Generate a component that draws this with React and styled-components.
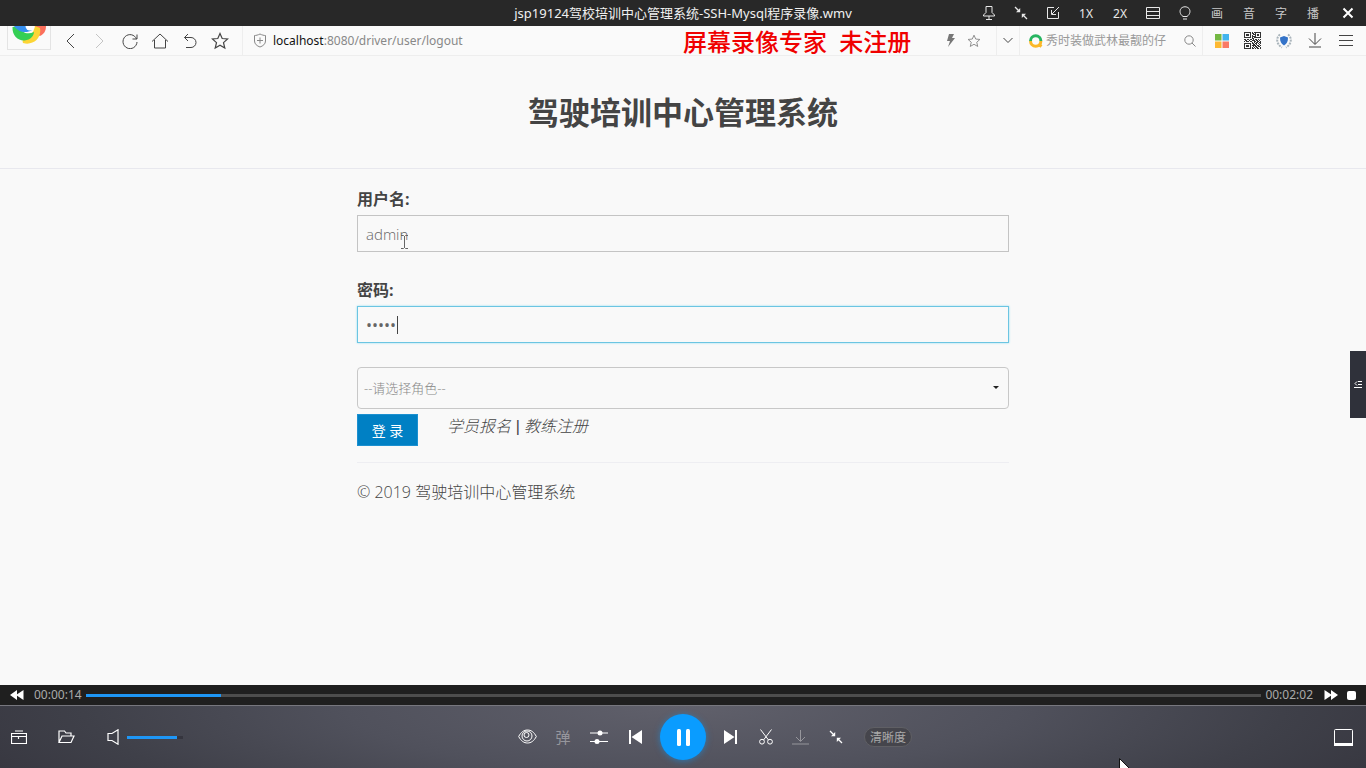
import { useState } from 'react';
import styled, { createGlobalStyle } from 'styled-components';

const GlobalStyle = createGlobalStyle`
  * {
    box-sizing: border-box;
  }

  body {
    margin: 0;
    background: #f9f9f9;
    font-family: 'Noto Sans', 'Noto Sans CJK SC', sans-serif;
  }

  button, input, select {
    font-family: inherit;
    margin: 0;
  }

  svg {
    display: block;
    flex: none;
  }
`;

function formatTime(seconds) {
  const pad = (n) => String(n).padStart(2, '0');
  return `${pad(Math.floor(seconds / 3600))}:${pad(Math.floor(seconds / 60) % 60)}:${pad(seconds % 60)}`;
}

// line icons share the same stroke settings
function Line({ w = 16, h = w, stroke = 'currentColor', sw = 1, children }) {
  return (
    <svg width={w} height={h} viewBox={`0 0 ${w} ${h}`} fill="none" stroke={stroke} strokeWidth={sw} aria-hidden="true">
      {children}
    </svg>
  );
}

const ShrinkIcon = () => (
  <Line w={14}>
    <path d="M1 1l4 4M13 13l-4-4" strokeWidth="1.3" />
    <path d="M6.2 2v4.2H2zM7.8 12V7.8H12z" fill="currentColor" stroke="none" />
  </Line>
);

const StarIcon = ({ size }) => (
  <svg width={size} height={size} viewBox="0 0 18 18" fill="none" stroke="currentColor" strokeWidth="1.2" aria-hidden="true">
    <path d="M9 1.500l2.200 5 5.400.5-4.100 3.600 1.300 5.400L9 13.200 4.200 16l1.300-5.400L1.400 7l5.400-.5z" />
  </svg>
);

const BrowserLogo = () => (
  <svg width="34" height="34" viewBox="0 0 34 34" aria-hidden="true">
    <path d="M18 1a16 16 0 0 1 16 15c0 5-2 8-6 10-3-1-4-5-5-9z" fill="#fb6f5c" />
    <path d="M28 18c2 10-7 18-17 15-1-3 0-5 3-6 6-2 8-6 9-11z" fill="#fcd535" />
    <path d="M.5 17c-.5 9 6 14 12 13.500C19 30 22 25 22 22c-6 3-13 1-15-6z" fill="#35cf55" />
    <path d="M2 16C3 6 12 1 19 3l1 17c-6 4-14 2-18-4z" fill="#358ff0" />
    <circle cx="18" cy="16" r="4.500" fill="#fff" />
  </svg>
);

const QR_ROWS = [
  '11111110101111111',
  '10000010110100001',
  '10111010011101101',
  '10111010100101101',
  '10000010111100001',
  '11111110101111111',
  '00000000110000000',
  '11011011010110101',
  '01100100111011010',
  '10111011001101101',
  '00000000101011011',
  '11111110110110101',
  '10000010011010010',
  '10111010111101101',
  '10111010010110110',
  '10000010101011001',
  '11111110110101101',
];

const QrIcon = () => (
  <svg width="17" height="17" viewBox="0 0 17 17" fill="#333" shapeRendering="crispEdges" aria-hidden="true">
    {QR_ROWS.map((row, y) =>
      row.split('').map((bit, x) => (bit === '1' ? <rect key={`${x}-${y}`} x={x} y={y} width="1" height="1" /> : null))
    )}
  </svg>
);

const titleTools = [
  {
    name: '置顶',
    icon: (
      <Line w={14} h={16}>
        <path d="M4 1.500h6v6l2.500 2.500v1h-11v-1L4 7.500zM7 11v3M4 14.500h6" />
      </Line>
    ),
  },
  { name: '迷你', icon: <ShrinkIcon /> },
  {
    name: '还原',
    icon: (
      <Line w={14}>
        <path d="M8 1.500H1.500v11h11V6M13 1L6 8M5.500 4v4.500H10" />
      </Line>
    ),
  },
  { name: '1X', text: '1X', wide: true },
  { name: '2X', text: '2X', wide: true },
  {
    name: '列表',
    icon: (
      <Line w={14} h={13}>
        <path d="M.5.5h13v11H.5zM.5 4.500h13M.5 8.500h13" />
      </Line>
    ),
  },
  {
    name: '关灯',
    icon: (
      <Line w={12} h={14}>
        <path d="M4 10.500C.5 8 .5 4.500 2 2.500c2-2.300 6-2.300 8 0 1.500 2 1.500 5.500-2 8zM4 13h4" />
      </Line>
    ),
  },
  { name: '画', text: '画', dim: true },
  { name: '音', text: '音', dim: true },
  { name: '字', text: '字', dim: true },
  { name: '播', text: '播', dim: true },
];

const navTools = [
  { name: '后退', icon: <Line w={12} h={16}><path d="M10 1L3 8l7 7" /></Line> },
  { name: '前进', faded: true, icon: <Line w={12} h={16}><path d="M2 1l7 7-7 7" /></Line> },
  { name: '刷新', icon: <Line w={16}><path d="M14.500 6A7 7 0 1 0 15 9M15 1.500V6h-4.500" /></Line> },
  { name: '主页', icon: <Line w={18} h={16}><path d="M1 8.500L9 1l8 7.500M3.500 7v8h11V7" /></Line> },
  { name: '撤销', icon: <Line w={14} h={16}><path d="M5 1L1.500 4.500 5 8M1.500 4.500H8a5 5 0 0 1 0 10H3" /></Line> },
  { name: '收藏', icon: <StarIcon size={18} /> },
];

const extensionTools = [
  {
    name: '应用',
    icon: (
      <svg width="14" height="14" viewBox="0 0 14 14" aria-hidden="true">
        <path fill="#74b843" d="M0 0h6.500v6.500H0z" />
        <path fill="#42b4ee" d="M7.500 0H14v6.500H7.500z" />
        <path fill="#fdb933" d="M0 7.500h6.500V14H0z" />
        <path fill="#f97a66" d="M7.500 7.500H14V14H7.500z" />
      </svg>
    ),
  },
  { name: '二维码', icon: <QrIcon /> },
  {
    name: '安全',
    icon: (
      <svg width="16" height="16" viewBox="0 0 16 16" fill="none" aria-hidden="true">
        <path d="M4 1.500C0 4.500 0 11 6 14.500M12 1.500c4 3 4 9.500-2 13" stroke="#a9b4bb" strokeWidth="2" strokeDasharray="2 1" />
        <path d="M8 3l4 1.500c0 4-1 6-4 8-3-2-4-4-4-8z" fill="#3473c8" />
      </svg>
    ),
  },
  { name: '下载', icon: <Line w={14} h={15}><path d="M7 0v11M1 5.500l6 6 6-6M1 14h12" /></Line> },
  { name: '菜单', icon: <Line w={14} h={13}><path d="M0 1.500h14M0 6.500h14M0 11.500h14" /></Line> },
];

function BrowserBar() {
  return (
    <Toolbar>
      <LogoBox><BrowserLogo /></LogoBox>
      <NavGroup>
        {navTools.map((tool) => (
          <ToolButton key={tool.name} aria-label={tool.name} $faded={tool.faded}>{tool.icon}</ToolButton>
        ))}
      </NavGroup>
      <AddressBox>
        <Line w={14} h={15} stroke="#888">
          <path d="M7 1c2 1 4 1.500 5.500 1.500V8c0 3-2.500 5-5.500 6-3-1-5.500-3-5.500-6V2.500C3 2.500 5 2 7 1zM7 4.500v6M4 7.500h6" />
        </Line>
        <Url href="#logout"><b>localhost</b>:8080/driver/user/logout</Url>
        <SmallTool aria-label="极速模式">
          <svg width="9" height="13" viewBox="0 0 9 13" fill="#777" aria-hidden="true">
            <path d="M3 0h5L6 4h3L2 13l2-6H1z" />
          </svg>
        </SmallTool>
        <SmallTool aria-label="收藏此页"><StarIcon size={14} /></SmallTool>
      </AddressBox>
      <DropButton aria-label="展开"><Line w={10} h={7}><path d="M.5 1L5 5.500 9.500 1" /></Line></DropButton>
      <SearchBox>
        <svg width="14" height="14" viewBox="0 0 14 14" fill="none" strokeWidth="3" aria-hidden="true">
          <path d="M1.500 7a5.200 5.200 0 0 1 10.400 0" stroke="#27b561" />
          <path d="M11.900 7a5.200 5.200 0 0 1-10.400 0M10 10.500l2.500 2" stroke="#fbb829" />
        </svg>
        <SearchInput aria-label="搜索" placeholder="秀时装做武林最靓的仔" />
        <SmallTool aria-label="搜索">
          <Line w={12}><circle cx="5" cy="5" r="4.200" /><path d="M8 8l3.500 3.500" /></Line>
        </SmallTool>
      </SearchBox>
      <ExtensionGroup>
        {extensionTools.map((tool) => (
          <ToolButton key={tool.name} aria-label={tool.name}>{tool.icon}</ToolButton>
        ))}
      </ExtensionGroup>
      <Watermark>屏幕录像专家 <span>未注册</span></Watermark>
    </Toolbar>
  );
}

function LoginPage() {
  const [username, setUsername] = useState('admin');
  const [password, setPassword] = useState('admin');
  const [role, setRole] = useState('');

  return (
    <Page>
      <PageHeader>
        <PageTitle>驾驶培训中心管理系统</PageTitle>
      </PageHeader>
      <LoginColumn>
        <form onSubmit={(e) => e.preventDefault()}>
          <Label htmlFor="username">用户名:</Label>
          <Field>
            <TextInput id="username" value={username} onChange={(e) => setUsername(e.target.value)} />
            <TextPointer>
              <Line w={7} h={14} stroke="#666"><path d="M0 .5h2.500l1 1 1-1H7M3.500 1v12M0 13.500h2.500l1-1 1 1H7" /></Line>
            </TextPointer>
          </Field>
          <Label htmlFor="password">密码:</Label>
          <Field>
            <TextInput id="password" type="password" $active value={password} onChange={(e) => setPassword(e.target.value)} />
            <Caret />
          </Field>
          <SelectWrap>
            <RoleSelect aria-label="角色" value={role} onChange={(e) => setRole(e.target.value)}>
              <option value="">--请选择角色--</option>
              <option value="student">学员</option>
              <option value="coach">教练</option>
            </RoleSelect>
            <SelectArrow width="6" height="3" viewBox="0 0 6 3" aria-hidden="true"><path d="M0 0h6L3 3z" fill="#222" /></SelectArrow>
          </SelectWrap>
          <Actions>
            <LoginButton type="submit">登 录</LoginButton>
            <Links>
              <a href="#student">学员报名</a> | <a href="#coach">教练注册</a>
            </Links>
          </Actions>
        </form>
        <Footer>© 2019 驾驶培训中心管理系统</Footer>
      </LoginColumn>
    </Page>
  );
}

export default function App() {
  const duration = 122;
  const [time, setTime] = useState(14);
  const [volume, setVolume] = useState(90);

  return (
    <Player>
      <GlobalStyle />
      <TitleBar>
        <FileName>jsp19124驾校培训中心管理系统-SSH-Mysql程序录像.wmv</FileName>
        <TitleTools>
          {titleTools.map((tool) => (
            <TitleButton key={tool.name} aria-label={tool.name} $wide={tool.wide} $dim={tool.dim}>
              {tool.icon || tool.text}
            </TitleButton>
          ))}
          <CloseButton aria-label="关闭"><Line w={12} sw={2}><path d="M1.500 1.500l9 9M10.500 1.500l-9 9" /></Line></CloseButton>
        </TitleTools>
      </TitleBar>

      <BrowserBar />
      <LoginPage />

      <SideTab aria-label="播放列表">
        <Line w={8} h={8}><path d="M4 .5h4M4 3.500h4M0 6.500h8M3 .5L1 2.500l2 2" /></Line>
      </SideTab>

      <SeekRow>
        <SeekButton aria-label="快退">
          <svg width="14" height="10" viewBox="0 0 14 10" fill="#fff" aria-hidden="true"><path d="M7 0v10L0 5zM13.500 0v10L6 5z" /></svg>
        </SeekButton>
        <Time>{formatTime(time)}</Time>
        <Slider
          type="range" aria-label="进度" min="0" max={duration} value={time} $rest="#4d4d4d"
          style={{ '--fill': `${(time / duration) * 100}%` }}
          onChange={(e) => setTime(Number(e.target.value))}
        />
        <Time $end>{formatTime(duration)}</Time>
        <SeekButton aria-label="快进">
          <svg width="14" height="10" viewBox="0 0 14 10" fill="#fff" aria-hidden="true"><path d="M.5 0v10L8 5zM7 0v10l7-5z" /></svg>
        </SeekButton>
        <StopButton aria-label="停止" />
      </SeekRow>

      <Controls>
        <ControlSide>
          <FileTools>
            <ControlButton aria-label="工具箱">
              <Line w={16} h={15}><path d="M4 1h8M.5 3.500h15v10H.5zM.5 6.500h15M7.500 6.500v2.500" strokeWidth="1.200" /></Line>
            </ControlButton>
            <ControlButton aria-label="打开文件">
              <Line w={17} h={14}><path d="M1 12.500V1h5.500L8 3h5v3M1 12.500h12L16 6H4z" strokeWidth="1.200" /></Line>
            </ControlButton>
            <ControlButton aria-label="静音">
              <Line w={12} h={16}><path d="M1 4.500h4L11 .8v14.400L5 11.500H1z" strokeWidth="1.200" /></Line>
            </ControlButton>
          </FileTools>
          <Volume>
            <Slider
              type="range" aria-label="音量" min="0" max="100" value={volume} $rest="#35353e"
              style={{ '--fill': `${volume}%` }}
              onChange={(e) => setVolume(Number(e.target.value))}
            />
          </Volume>
          <PlayTools>
            <ControlButton aria-label="画质">
              <Line w={19} h={17}><path d="M.7 7.500C3 3 6 1 9.500 1S16 3 18.300 7.500C16 12 13 14 9.500 14S3 12 .7 7.500z" /><circle cx="9" cy="7" r="5" /><circle cx="8.500" cy="6" r="2.500" /></Line>
            </ControlButton>
            <ControlButton aria-label="弹幕" $dim>弹</ControlButton>
            <ControlButton aria-label="设置">
              <Line w={18} h={14}><path d="M0 3h18M0 11.500h18" /><circle cx="10" cy="3" r="2.500" fill="currentColor" stroke="none" /><circle cx="7" cy="11.500" r="2.500" fill="currentColor" stroke="none" /></Line>
            </ControlButton>
            <ControlButton aria-label="上一个">
              <svg width="13" height="14" viewBox="0 0 13 14" fill="currentColor" aria-hidden="true"><path d="M0 0h2v14H0zM13 0v14L2.500 7z" /></svg>
            </ControlButton>
          </PlayTools>
        </ControlSide>

        <PauseButton aria-label="暂停">
          <svg width="13" height="17" viewBox="0 0 13 17" fill="#fff" aria-hidden="true"><rect width="4" height="17" rx="1.500" /><rect x="9" width="4" height="17" rx="1.500" /></svg>
        </PauseButton>

        <ControlSide>
          <PlayTools $tight>
            <ControlButton aria-label="下一个">
              <svg width="13" height="14" viewBox="0 0 13 14" fill="currentColor" aria-hidden="true"><path d="M11 0h2v14h-2zM0 0v14l10.500-7z" /></svg>
            </ControlButton>
            <ControlButton aria-label="截取">
              <Line w={14} h={16}><path d="M1.500.5l8 10.500M12.500.5L4.500 11" /><circle cx="3" cy="12.700" r="2.400" /><circle cx="11" cy="12.700" r="2.400" /></Line>
            </ControlButton>
            <ControlButton aria-label="下载" $dim>
              <Line w={17} h={15}><path d="M8.500 0v11M4 7l4.500 4.500L13 7M0 14h17" /></Line>
            </ControlButton>
            <ControlButton aria-label="缩小"><ShrinkIcon /></ControlButton>
            <Quality>清晰度</Quality>
          </PlayTools>
          <ControlButton aria-label="全屏">
            <svg width="19" height="17" viewBox="0 0 19 17" aria-hidden="true"><path d="M.5 1.500a1 1 0 0 1 1-1h16a1 1 0 0 1 1 1V15H.5z" fill="none" stroke="#fff" /><path d="M0 14h19v3H0z" fill="#fff" /></svg>
          </ControlButton>
        </ControlSide>
      </Controls>

      <MousePointer width="14" height="20" viewBox="0 0 14 20" aria-hidden="true">
        <path d="M.5.500v16l4-3.500 3 6 2-1-3-5.500h6z" fill="#fff" stroke="#111" />
      </MousePointer>
    </Player>
  );
}

const Player = styled.div`
  position: relative;
  display: flex;
  flex-direction: column;
  min-height: 100vh;
  overflow: hidden;
`;

const PlainButton = styled.button`
  display: flex;
  align-items: center;
  justify-content: center;
  flex: none;
  padding: 0;
  border: none;
  background: none;
  color: inherit;
  cursor: pointer;
`;

const TitleBar = styled.header`
  display: grid;
  grid-template-columns: 1fr auto 1fr;
  align-items: center;
  height: 26px;
  background: #282828;
  color: #f0f0f0;
`;

const FileName = styled.span`
  grid-column: 2;
  font-size: 13px;
  line-height: 26px;
  white-space: nowrap;
`;

const TitleTools = styled.div`
  display: flex;
  justify-content: flex-end;
`;

const TitleButton = styled(PlainButton)`
  width: ${(props) => (props.$wide ? 34 : 32)}px;
  height: 26px;
  font-size: 12px;
  color: ${(props) => (props.$dim ? '#c8c8c8' : '#e8e8e8')};
`;

const CloseButton = styled(TitleButton)`
  width: 37px;
  color: #fff;
`;

const Toolbar = styled.nav`
  position: relative;
  display: flex;
  align-items: center;
  height: 30px;
  border-bottom: 1px solid #eeeeee;
  background: #fafafa;
  color: #444;
`;

const LogoBox = styled.div`
  display: flex;
  align-items: flex-end;
  align-self: flex-start;
  justify-content: center;
  width: 44px;
  height: 24px;
  margin: 0 4px 0 7px;
  padding-bottom: 5px;
  border: 1px solid #e4e4e4;
  border-top: none;
  overflow: hidden;
`;

const NavGroup = styled.div`
  display: flex;
  margin-right: 7px;
`;

const ToolButton = styled(PlainButton)`
  width: 30px;
  height: 29px;
  color: ${(props) => (props.$faded ? '#c4c4c4' : '#444')};
`;

const AddressBox = styled.div`
  display: flex;
  align-items: center;
  flex: 1;
  height: 29px;
  padding: 0 10px;
  border-left: 1px solid #eeeeee;
  border-right: 1px solid #eeeeee;
`;

const Url = styled.a`
  flex: 1;
  margin-left: 6px;
  font-size: 12px;
  color: #888;
  text-decoration: none;

  b {
    font-weight: 400;
    color: #111;
  }
`;

const SmallTool = styled(PlainButton)`
  width: 24px;
  height: 24px;
  color: #888;
`;

const DropButton = styled(ToolButton)`
  width: 22px;
`;

const SearchBox = styled.div`
  display: flex;
  align-items: center;
  width: 184px;
  height: 29px;
  padding-left: 9px;
  border-left: 1px solid #eeeeee;
  border-right: 1px solid #eeeeee;
`;

const SearchInput = styled.input`
  flex: 1;
  min-width: 0;
  margin-left: 3px;
  padding: 0;
  border: none;
  outline: none;
  background: none;
  font-size: 12px;

  &::placeholder {
    color: #999;
  }
`;

const ExtensionGroup = styled.div`
  display: flex;
  padding: 0 5px 0 3px;

  button {
    width: 31px;
  }
`;

const Watermark = styled.div`
  position: absolute;
  left: 50%;
  top: 0;
  font-size: 24px;
  font-weight: 500;
  line-height: 32px;
  white-space: nowrap;
  color: #f00000;
  pointer-events: none;

  span {
    margin-left: 6px;
  }
`;

const Page = styled.main`
  flex: 1;
  background: #f9f9f9;
  color: #444;
  font-family: 'Open Sans', 'Noto Sans CJK SC', sans-serif;
`;

const PageHeader = styled.div`
  padding: 32px 0;
  border-bottom: 1px solid #e8e8ee;
  text-align: center;
`;

const PageTitle = styled.h1`
  margin: 0;
  font-size: 31px;
  line-height: 48px;
  color: #444;
`;

const LoginColumn = styled.section`
  width: calc(50% + 1px);
  min-width: 400px;
  margin: 0 auto;
  padding: 16px 16px 0;
`;

const Label = styled.label`
  display: block;
  margin-bottom: 2px;
  font-size: 16px;
  font-weight: 700;
  line-height: 28px;
`;

const Field = styled.div`
  position: relative;
  margin-bottom: 24px;
`;

const TextInput = styled.input`
  display: block;
  width: 100%;
  height: 37px;
  padding: 0 8px;
  border: 1px solid ${(props) => (props.$active ? '#6cc5e2' : '#c4c4c4')};
  border-radius: 0;
  outline: none;
  box-shadow: ${(props) => (props.$active ? '0 0 2px #8fdcf2' : 'none')};
  background: #f9f9f9;
  font-size: ${(props) => (props.$active ? 16 : 15)}px;
  font-weight: ${(props) => (props.$active ? 400 : 300)};
  color: #666;
`;

const TextPointer = styled.span`
  position: absolute;
  left: 44px;
  top: 20px;
  pointer-events: none;
`;

const Caret = styled.span`
  position: absolute;
  left: 40px;
  top: 10px;
  width: 1px;
  height: 18px;
  background: #444;
`;

const SelectWrap = styled.div`
  position: relative;
  margin-bottom: 5px;
`;

const RoleSelect = styled.select`
  display: block;
  width: 100%;
  height: 42px;
  padding: 0 6px;
  appearance: none;
  border: 1px solid #c8c8c8;
  border-radius: 4px;
  background: #f9f9f9;
  font-size: 13px;
  font-weight: 300;
  color: #888;
`;

const SelectArrow = styled.svg`
  position: absolute;
  right: 10px;
  top: 19px;
  pointer-events: none;
`;

const Actions = styled.div`
  display: flex;
  align-items: flex-start;
  padding-bottom: 16px;
  border-bottom: 1px solid #eeeef2;
`;

const LoginButton = styled(PlainButton)`
  width: 61px;
  height: 32px;
  border: 1px solid #1c90d0;
  background: #0080c4;
  font-size: 14px;
  color: #fff;
`;

const Links = styled.div`
  margin-left: 29px;
  font-family: 'Liberation Sans', 'Noto Sans CJK SC', sans-serif;
  font-size: 16px;
  font-style: italic;
  font-weight: 300;
  line-height: 26px;

  a {
    color: #444;
    text-decoration: none;
  }
`;

const Footer = styled.p`
  margin: 16px 0;
  font-size: 16px;
  font-weight: 300;
  line-height: 26px;
  color: #444;
`;

const SideTab = styled(PlainButton)`
  position: absolute;
  right: 0;
  top: 351px;
  width: 16px;
  height: 67px;
  background: #2f313a;
  color: #fff;
`;

const SeekRow = styled.div`
  display: flex;
  align-items: center;
  height: 20px;
  padding: 0 9px;
  background: #1f1f1f;
`;

const SeekButton = styled(PlainButton)`
  width: 16px;
  height: 20px;
`;

const Time = styled.time`
  margin: ${(props) => (props.$end ? '0 10px 0 4px' : '0 4px 0 9px')};
  font-size: 12px;
  line-height: 20px;
  color: #aaa;
`;

const Slider = styled.input`
  flex: 1;
  min-width: 0;
  height: 3px;
  appearance: none;
  outline: none;
  cursor: pointer;
  background: linear-gradient(to right, #1e96f5 var(--fill), ${(props) => props.$rest} var(--fill));

  &::-webkit-slider-thumb {
    appearance: none;
    width: 0;
    height: 0;
  }
`;

const StopButton = styled(PlainButton)`
  width: 9px;
  height: 9px;
  margin: 0 1px 0 8px;
  border-radius: 2px;
  background: #fff;
`;

const Controls = styled.footer`
  display: grid;
  grid-template-columns: 1fr auto 1fr;
  align-items: center;
  gap: 7px;
  height: 63px;
  border-top: 1px solid #77777e;
  background: radial-gradient(ellipse 55% 240% at 50% 0, #60606b 0%, #50515c 45%, #3f4049 80%, #383841 100%);
  color: #fff;
`;

const ControlSide = styled.div`
  display: flex;
  align-items: center;
  justify-content: space-between;
  padding-right: 5px;

  &:first-child {
    padding-right: 0;
  }
`;

const ControlButton = styled(PlainButton)`
  width: 36px;
  height: 36px;
  font-size: 15px;
  line-height: 20px;
  color: ${(props) => (props.$dim ? '#96969c' : '#fff')};
`;

const FileTools = styled.div`
  display: flex;
  gap: 19px;
  padding-left: 5px;

  button {
    width: 28px;
  }
`;

const Volume = styled.div`
  display: flex;
  align-items: center;
  width: 56px;
  margin-right: auto;
`;

const PlayTools = styled.div`
  display: flex;
  align-items: center;

  ${ControlButton} {
    width: ${(props) => (props.$tight ? 35 : 36)}px;
  }
`;

const PauseButton = styled(PlainButton)`
  width: 46px;
  height: 46px;
  border-radius: 50%;
  background: #0a9cff;
  box-shadow: 0 1px 6px rgba(10, 156, 255, 0.5);
`;

const Quality = styled(PlainButton)`
  height: 20px;
  margin-left: 11px;
  padding: 0 5px;
  border: 1px solid #5f5f64;
  border-radius: 10px;
  background: #45454c;
  font-size: 12px;
  color: #aaa;
`;

const MousePointer = styled.svg`
  position: absolute;
  right: 233px;
  bottom: -10px;
  pointer-events: none;
`;
